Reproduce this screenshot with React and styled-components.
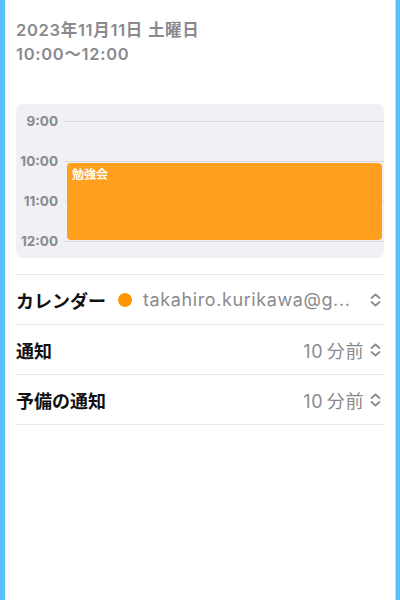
import React from 'react';
import styled, { createGlobalStyle } from 'styled-components';

const Global = createGlobalStyle`
  html, body { margin: 0; padding: 0; background: #5ac0ff; }
  body { font-family: Inter, "Noto Sans CJK JP", sans-serif; }
`;

const Frame = styled.div`
  height: 600px;
  padding: 0 4px 0 5px;
  box-sizing: border-box;
  background: #5ac0ff;
`;

const Sheet = styled.div`
  height: 100%;
  background: #fff;
  padding: 0 11px;
  box-sizing: border-box;
  border-right: 1px solid #b6e2ff;
`;

const Header = styled.div`
  padding-top: 18px;
  color: #8a8a8e;
  font-size: 16.5px;
  font-weight: 600;
  line-height: 24px;
  letter-spacing: 0.7px;
`;

const Timeline = styled.div`
  margin-top: 38px;
  background: #f0f0f5;
  border-radius: 7px;
  height: 154px;
  position: relative;
  padding-top: 10px;
  box-sizing: border-box;
`;

const HourRow = styled.div`
  display: flex;
  align-items: center;
  height: 40px;
  &:last-of-type { height: 14px; }
`;

const HourLabel = styled.div`
  width: 42px;
  text-align: right;
  font-size: 13.5px;
  font-weight: 700;
  color: #8a8a8e;
  line-height: 14px;
  margin-top: -26px;
`;

const HourLine = styled.div`
  flex: 1;
  height: 1px;
  background: #d6d6dc;
  margin-left: 7px;
  margin-top: -26px;
`;

const Event = styled.div`
  position: absolute;
  left: 51px;
  right: 2px;
  top: 59px;
  height: 77px;
  border-radius: 4px;
  background: rgba(255, 152, 10, 0.92);
  color: #fff;
  font-size: 12px;
  font-weight: 700;
  padding: 2px 5px;
  box-sizing: border-box;
  font-family: "Noto Sans CJK JP", sans-serif;
`;

const List = styled.div`
  margin-top: 16px;
  border-top: 1px solid #e8e8ea;
`;

const Row = styled.div`
  display: flex;
  align-items: center;
  height: 49px;
  border-bottom: 1px solid #e8e8ea;
`;

const Label = styled.div`
  font-size: 18px;
  font-weight: 700;
  color: #111;
  font-family: "Noto Sans CJK JP", sans-serif;
`;

const Dot = styled.span`
  width: 14px;
  height: 14px;
  border-radius: 50%;
  background: #ff9500;
  margin-left: 12px;
  flex-shrink: 0;
`;

const Value = styled.div`
  font-size: 18px;
  color: #8a8a8e;
  letter-spacing: 0.6px;
  word-spacing: -2px;
  margin-left: ${p => (p.$push ? 'auto' : '11px')};
  white-space: nowrap;
`;

const Chevron = styled.svg`
  width: 11px;
  height: 14px;
  margin-left: ${p => (p.$auto ? 'auto' : '6px')};
  margin-right: 3px;
  flex-shrink: 0;
`;

const UpDown = props => (
  <Chevron viewBox="0 0 11 14" {...props}>
    <path
      d="M1.5 5 L5.5 1.5 L9.5 5 M1.5 9 L5.5 12.5 L9.5 9"
      fill="none"
      stroke="#8a8a8e"
      strokeWidth="1.8"
      strokeLinecap="round"
      strokeLinejoin="round"
    />
  </Chevron>
);

export default function App() {
  const hours = ['9:00', '10:00', '11:00', '12:00'];
  return (
    <>
      <Global />
      <Frame>
        <Sheet>
          <Header>
            <div>2023年11月11日 土曜日</div>
            <div>10:00〜12:00</div>
          </Header>
          <Timeline>
            {hours.map(h => (
              <HourRow key={h}>
                <HourLabel>{h}</HourLabel>
                <HourLine />
              </HourRow>
            ))}
            <Event>勉強会</Event>
          </Timeline>
          <List>
            <Row>
              <Label>カレンダー</Label>
              <Dot />
              <Value>takahiro.kurikawa@g...</Value>
              <UpDown $auto />
            </Row>
            <Row>
              <Label>通知</Label>
              <Value $push>10 分前</Value>
              <UpDown />
            </Row>
            <Row>
              <Label>予備の通知</Label>
              <Value $push>10 分前</Value>
              <UpDown />
            </Row>
          </List>
        </Sheet>
      </Frame>
    </>
  );
}
